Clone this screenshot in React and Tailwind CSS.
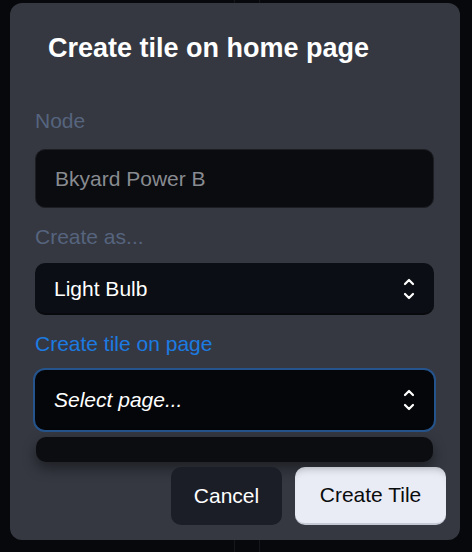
import React from 'react';

const Chevrons = () => (
  <svg width="14" height="26" viewBox="0 0 14 26" fill="none" stroke="white" strokeWidth="2.2" strokeLinecap="round" strokeLinejoin="round">
    <path d="M3 8 L7 4 L11 8" />
    <path d="M3 18 L7 22 L11 18" />
  </svg>
);

const Label = ({ children, className = '' }) => (
  <div className={`text-[21px] leading-[28px] ${className}`}>{children}</div>
);

export default function App() {
  return (
    <div className="w-[472px] h-[552px] bg-[#07080b] overflow-hidden relative" style={{ fontFamily: '"Liberation Sans", Arial, sans-serif' }}>
      {/* faint background columns */}
      <div className="absolute left-[234px] top-0 bottom-0 w-px bg-[#15171c]" />
      <div className="absolute left-[259px] top-0 bottom-0 w-px bg-[#15171c]" />

      <div className="relative ml-[10px] mt-[3px] w-[450px] h-[537px] rounded-[12px] bg-[#353841] flex flex-col pt-[28px] pl-[25px] pr-[26px]">
        <h2 className="pl-[13px] text-[27px] leading-[34px] font-bold text-white">Create tile on home page</h2>

        <Label className="mt-[42px] text-[#56647e]">Node</Label>
        <div className="mt-[14px] h-[59px] rounded-[10px] bg-[#0b0c10] border border-[#1c1e24] flex items-center pl-[19px] text-[21px] text-[#888b90]">
          Bkyard Power B
        </div>

        <Label className="mt-[15px] text-[#56647e]">Create as...</Label>
        <div className="mt-[12px] h-[52px] rounded-[10px] bg-[#0b0e14] border-b-2 border-[#08090c] flex items-center justify-between pl-[19px] pr-[18px] pt-[2px] text-[21px] text-white">
          <span>Light Bulb</span>
          <Chevrons />
        </div>

        <Label className="mt-[15px] text-[#1c7be2]">Create tile on page</Label>
        <div className="mt-[10px] -mx-[2px] h-[64px] rounded-[12px] border-2 border-[#25548c] bg-[#050609] flex items-center justify-between pl-[19px] pr-[18px] text-[21px] text-white italic">
          <span>Select page...</span>
          <Chevrons />
        </div>
        <div className="mt-[5px] mx-[1px] h-[25px] rounded-[10px] bg-[#0c0d11] shadow-[0_6px_14px_rgba(0,0,0,0.45)]" />

        <div className="mt-[5px] flex justify-end gap-[13px] -mr-[12px]">
          <button className="w-[111px] h-[58px] rounded-[10px] bg-[#1b1e26] text-white text-[21px]">Cancel</button>
          <button className="w-[151px] h-[58px] rounded-[10px] bg-[#e9ecf5] border-b-2 border-[#c5c9d3] text-[#0a0b0d] text-[21px] shadow-[inset_0_8px_10px_-8px_rgba(0,0,0,0.35)]">Create Tile</button>
        </div>
      </div>
    </div>
  );
}
